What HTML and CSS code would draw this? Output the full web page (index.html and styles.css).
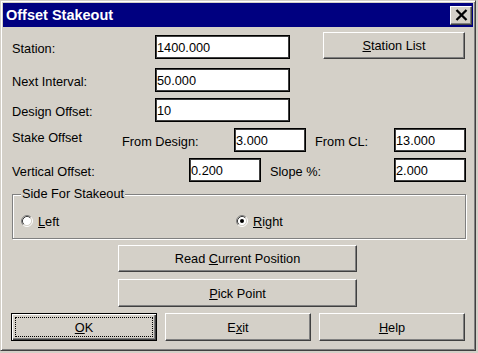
FILE: index.html
```html
<!DOCTYPE html>
<html lang="en">

<head>
    <meta charset="UTF-8">
    <title>Offset Stakeout</title>
    <link rel="stylesheet" href="styles.css">
</head>

<body>
    <div class="window">
        <div class="titlebar">
            <span class="title">Offset Stakeout</span>
            <button class="close">
                <svg width="13" height="12" viewBox="0 0 13 12">
                    <path d="M1.5 1 L11.5 11 M11.5 1 L1.5 11" stroke="#000" stroke-width="2.3" fill="none"/>
                </svg>
            </button>
        </div>
        <div class="content">
            <div class="row row-first">
                <span class="lbl lbl-main">Station:</span>
                <input class="field field-wide" type="text" value="1400.000">
                <button class="btn btn-list"><u>S</u>tation List</button>
            </div>
            <div class="row row-gap">
                <span class="lbl lbl-main">Next Interval:</span>
                <input class="field field-wide" type="text" value="50.000">
            </div>
            <div class="row">
                <span class="lbl lbl-main">Design Offset:</span>
                <input class="field field-wide" type="text" value="10">
            </div>
            <div class="row">
                <span class="lbl lbl-up lbl-stake">Stake Offset</span>
                <span class="lbl lbl-design">From Design:</span>
                <input class="field field-short" type="text" value="3.000">
                <span class="lbl lbl-cl">From CL:</span>
                <input class="field field-short" type="text" value="13.000">
            </div>
            <div class="row">
                <span class="lbl lbl-vertical">Vertical Offset:</span>
                <input class="field field-short" type="text" value="0.200">
                <span class="lbl lbl-slope">Slope %:</span>
                <input class="field field-short" type="text" value="2.000">
            </div>

            <div class="group">
                <span class="group-title">Side For Stakeout</span>
                <div class="radios">
                    <div class="radio-item">
                        <svg class="radio" width="12" height="12" viewBox="0 0 12 12">
                            <circle cx="6" cy="6" r="4.5" fill="#fff"/>
                            <path d="M2.11 9.89 A5.5 5.5 0 0 1 9.89 2.11" stroke="#808080" fill="none"/>
                            <path d="M9.89 2.11 A5.5 5.5 0 0 1 2.11 9.89" stroke="#fff" fill="none"/>
                            <path d="M2.82 9.18 A4.5 4.5 0 0 1 9.18 2.82" stroke="#404040" fill="none"/>
                            <path d="M9.18 2.82 A4.5 4.5 0 0 1 2.82 9.18" stroke="#d4d0c8" fill="none"/>
                        </svg>
                        <span><u>L</u>eft</span>
                    </div>
                    <div class="radio-item">
                        <svg class="radio" width="12" height="12" viewBox="0 0 12 12">
                            <circle cx="6" cy="6" r="4.5" fill="#fff"/>
                            <path d="M2.11 9.89 A5.5 5.5 0 0 1 9.89 2.11" stroke="#808080" fill="none"/>
                            <path d="M9.89 2.11 A5.5 5.5 0 0 1 2.11 9.89" stroke="#fff" fill="none"/>
                            <path d="M2.82 9.18 A4.5 4.5 0 0 1 9.18 2.82" stroke="#404040" fill="none"/>
                            <path d="M9.18 2.82 A4.5 4.5 0 0 1 2.82 9.18" stroke="#d4d0c8" fill="none"/>
                            <circle cx="6" cy="6" r="2" fill="#000"/>
                        </svg>
                        <span><u>R</u>ight</span>
                    </div>
                </div>
            </div>

            <button class="btn btn-wide btn-read">Read <u>C</u>urrent Position</button>
            <button class="btn btn-wide btn-pick"><u>P</u>ick Point</button>

            <div class="actions">
                <button class="btn btn-action btn-default"><span class="focus"><u>O</u>K</span></button>
                <button class="btn btn-action">E<u>x</u>it</button>
                <button class="btn btn-action"><u>H</u>elp</button>
            </div>
        </div>
    </div>
</body>

</html>
```

FILE: styles.css
```css
* {
    box-sizing: border-box;
}

body {
    margin: 0;
    background: #d4d0c8;
    font-family: "Liberation Sans", Arial, sans-serif;
    font-size: 12.75px;
    color: #000;
}

.window {
    width: 476px;
    height: 351px;
    padding: 2px;
    background: #d4d0c8;
    border: 1px solid;
    border-color: #d4d0c8 #404040 #404040 #d4d0c8;
    box-shadow: inset 1px 1px #fff, inset -1px -1px #808080;
    display: flex;
    flex-direction: column;
}

.titlebar {
    height: 24px;
    background: #000080;
    color: #fff;
    display: flex;
    align-items: center;
    justify-content: space-between;
    padding: 0 1px 0 3px;
}

.title {
    font-weight: bold;
    font-size: 14.5px;
}

.close {
    width: 22px;
    height: 19px;
    padding: 0;
    background: #d4d0c8;
    border: 1px solid;
    border-color: #fff #404040 #404040 #fff;
    box-shadow: inset -1px -1px #808080;
    display: flex;
    align-items: center;
    justify-content: center;
}

.content {
    display: flex;
    flex-direction: column;
    align-items: flex-start;
    padding-left: 9px;
}

.row {
    display: flex;
    align-items: center;
    margin-top: 6px;
}

.row-first {
    align-items: flex-end;
    margin-top: 5px;
}

.row-gap {
    margin-top: 9px;
}

.lbl {
    height: 24px;
    line-height: 28px;
    white-space: nowrap;
}

.lbl-up {
    line-height: 20px;
}

.lbl-main {
    width: 143px;
}

.lbl-stake {
    width: 110px;
}

.lbl-design {
    width: 112px;
}

.lbl-cl {
    width: 79px;
    margin-left: 9px;
}

.lbl-vertical {
    width: 177px;
}

.lbl-slope {
    width: 124px;
    margin-left: 9px;
}

.field {
    height: 24px;
    padding: 0 0 0 1px;
    border: 1px solid #000;
    box-shadow: inset 1px 1px #404040, inset -1px -1px #404040;
    background: #fff;
    font: inherit;
    color: #000;
    outline: none;
}

.field-wide {
    width: 135px;
}

.field-short {
    width: 72px;
}

.btn {
    padding: 0;
    background: #d4d0c8;
    border: 1px solid;
    border-color: #fff #404040 #404040 #fff;
    box-shadow: inset -1px -1px #808080;
    font: inherit;
    color: #000;
}

.btn-list {
    width: 142px;
    height: 27px;
    margin-left: 33px;
}

.group {
    margin-top: 12px;
    width: 454px;
    height: 45px;
    border: 1px solid #808080;
    box-shadow: inset 1px 1px #fff, 1px 1px #fff;
    display: flex;
    flex-direction: column;
    align-items: flex-start;
}

.group-title {
    margin: -8px 0 0 8px;
    padding: 0 1px;
    line-height: 14px;
    background: #d4d0c8;
}

.radios {
    display: flex;
    margin-top: 13px;
    padding-left: 8px;
}

.radio-item {
    width: 215px;
    height: 14px;
    display: flex;
    align-items: center;
    gap: 5px;
}

.btn-wide {
    width: 239px;
    margin-left: 106px;
}

.btn-read {
    height: 27px;
    margin-top: 6px;
}

.btn-pick {
    height: 28px;
    margin-top: 7px;
}

.actions {
    display: flex;
    gap: 8px;
    margin: 6px 0 0 -1px;
}

.btn-action {
    width: 146px;
    height: 28px;
}

.btn-default {
    border-color: #000;
    box-shadow: inset 1px 1px #fff, inset -1px -1px #404040, inset -2px -2px #808080;
    display: flex;
}

.focus {
    flex: 1;
    margin: 3px;
    border: 1px dotted #000;
    display: flex;
    align-items: center;
    justify-content: center;
}
```
